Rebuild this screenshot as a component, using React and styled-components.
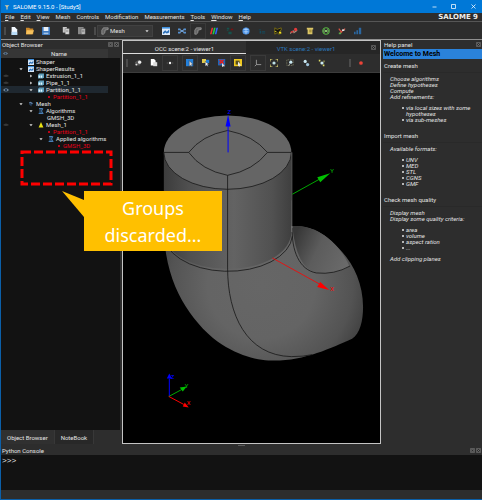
import React from 'react';
import styled, { createGlobalStyle } from 'styled-components';

const GlobalStyle = createGlobalStyle`
    * { box-sizing: border-box; }
    body {
        margin: 0;
        background: #2d2d2d;
        color: #e4e4e4;
        font: 6px/7px Roboto, "Liberation Sans", sans-serif;
    }
    button, select, textarea {
        font: inherit;
        color: inherit;
        margin: 0;
        padding: 0;
        border: 0;
        background: none;
    }
    ul { margin: 0; padding: 0; list-style: none; }
    h2, h3, p { margin: 0; font: inherit; }
    svg { display: block; }
`;

const Window = styled.div`
    position: relative;
    height: 100vh;
    display: flex;
    flex-direction: column;
    border: 1px solid #0b5fa8;
    border-top: 0;
    border-right: 0;
`;

// Title bar
const TitleBar = styled.header`
    height: 13px;
    flex: none;
    display: flex;
    align-items: center;
    padding-left: 3px;
    gap: 3px;
    background: #0078d7;
    color: #fff;
`;

const Title = styled.span`
    flex: 1;
`;

const WindowButton = styled.button`
    width: ${(props) => props.$width || 16}px;
    height: 13px;
    display: grid;
    place-items: center;
`;

// Menu
const MenuBar = styled.nav`
    height: 9px;
    flex: none;
    display: flex;
    align-items: center;
    gap: 6px;
    padding-left: 4px;
    overflow: hidden;
    border-bottom: 1px solid #565656;
`;

const MenuItem = styled.button`
    line-height: 8px;
    white-space: nowrap;
    &::first-letter {
        text-decoration: ${(props) => (props.$key ? 'underline' : 'none')};
    }
`;

const Brand = styled.span`
    margin-left: auto;
    padding: 0 4px;
    color: #eee;
    font: bold 7px/8px "DejaVu Sans", sans-serif;
    white-space: nowrap;
`;

// Toolbars
const Toolbar = styled.div`
    height: ${(props) => props.$height}px;
    flex: none;
    display: flex;
    align-items: center;
    padding-left: 3px;
    background: #2d2d2d;
    border-bottom: 1px solid ${(props) => props.$line};
`;

const Handle = styled.span`
    width: 2px;
    height: 8px;
    flex: none;
    margin-left: ${(props) => props.$before || 0}px;
    margin-right: ${(props) => props.$after || 0}px;
    background: #4b4b4b;
`;

const Spacer = styled.span`
    width: 4px;
    flex: none;
`;

const ToolButton = styled.button`
    width: 16px;
    height: 16px;
    flex: none;
    display: grid;
    place-items: center;
    border: 1px solid ${(props) => (props.$framed ? '#3a3a3a' : 'transparent')};
`;

const Combo = styled.label`
    width: 56px;
    height: 12px;
    flex: none;
    display: flex;
    align-items: center;
    gap: 1px;
    padding: 0 3px;
    margin-right: 5px;
    background: #383838;
    border: 1px solid #414141;
`;

const ComboSelect = styled.select`
    flex: 1;
    appearance: none;
    line-height: 8px;
    outline: 0;
`;

// Docks
const Main = styled.main`
    flex: 1;
    min-height: 0;
    display: grid;
    grid-template-columns: 119px minmax(0, 1fr) 99px;
    column-gap: 2px;
`;

const Dock = styled.section`
    display: flex;
    flex-direction: column;
    min-width: 0;
    min-height: 0;
`;

const DockHeader = styled.h2`
    height: 9px;
    flex: none;
    display: flex;
    align-items: center;
    justify-content: space-between;
    padding: 0 1px;
    line-height: 8px;
`;

const DockControls = styled.span`
    display: flex;
    gap: 1px;
`;

const TreeHeader = styled.div`
    height: 9px;
    flex: none;
    display: grid;
    grid-template-columns: 9px 1fr;
    align-items: center;
    justify-items: center;
    margin-right: 12px;
    background: #363636;
`;

const Tree = styled.ul`
    flex: 1;
    background: #121212;
`;

const TreeRow = styled.li`
    height: 7px;
    display: flex;
    align-items: center;
    margin-right: 12px;
    white-space: nowrap;
    color: ${(props) => (props.$alert ? '#e60019' : '#e4e4e4')};
    background: ${(props) => (props.$selected ? '#1f2830' : 'none')};
`;

const Cell = styled.span`
    width: ${(props) => props.$width}px;
    height: 7px;
    flex: none;
    display: grid;
    place-items: center;
`;

const DockTabs = styled.div`
    height: 15px;
    flex: none;
    display: flex;
`;

const DockTab = styled.button`
    padding: 0 6px;
    height: 14px;
    background: ${(props) => (props.$active ? '#303030' : '#282828')};
    border-right: 1px solid #383838;
`;

// Viewer
const Viewer = styled.section`
    display: flex;
    flex-direction: column;
    min-width: 0;
    min-height: 0;
    margin-bottom: 1px;
    border: 1px solid #c4c4c4;
    background: #000;
`;

const ViewTabs = styled.div`
    height: 13px;
    flex: none;
    display: grid;
    grid-template-columns: 123px 1fr 14px;
    background: #262626;
`;

const ViewTab = styled.button`
    padding-top: 3px;
    color: ${(props) => (props.$active ? '#e4e4e4' : '#2b78bd')};
    background: ${(props) => (props.$active ? '#303030' : 'none')};
    border-bottom: 1px solid ${(props) => (props.$active ? '#ddd' : '#262626')};
`;

const CloseTab = styled.button`
    display: grid;
    place-items: center;
`;

const Scene = styled.svg`
    flex: 1;
    min-height: 0;
    width: 100%;
    font: 6px Roboto, sans-serif;
`;

// Help
const Banner = styled.p`
    height: 10px;
    flex: none;
    padding-left: 1px;
    color: #000;
    background: #2a82da;
    font-size: 7px;
    font-weight: bold;
    line-height: 10px;
`;

const HelpTitle = styled.h3`
    padding-left: 1px;
    height: 14px;
    line-height: 13px;
    border-bottom: 1px solid #292929;
`;

const HelpBody = styled.div`
    padding: 3px 2px 1px 7px;
    font-style: italic;
    line-height: 6px;
    p { margin-bottom: 5px; }
    ul { padding-left: 16px; margin-bottom: 5px; }
    li { position: relative; }
    li::before {
        content: "";
        position: absolute;
        left: -4px;
        top: 2px;
        width: 2px;
        height: 2px;
        border-radius: 1px;
        background: #e4e4e4;
    }
`;

// Console
const Splitter = styled.div`
    width: 7px;
    height: 1px;
    flex: none;
    align-self: center;
    background: #5c5c5c;
`;

const Console = styled.textarea`
    display: block;
    height: 35px;
    flex: none;
    padding: 2px 1px;
    resize: none;
    outline: 0;
    background: #121212;
    font: 8px/8px "Liberation Mono", monospace;
`;

const StatusBar = styled.footer`
    height: 9px;
    flex: none;
`;

// Annotations over the window
const Highlight = styled.svg`
    position: absolute;
    left: 19px;
    top: 150px;
`;

const Callout = styled.p`
    position: absolute;
    left: 83px;
    top: 191px;
    width: 138px;
    padding: 4px 0 2px;
    text-align: center;
    color: #fff;
    background: #ffc000;
    font: 18px/27px "Noto Sans", "Open Sans", sans-serif;
`;

const CalloutTail = styled.svg`
    position: absolute;
    right: 100%;
    top: 0;
`;

const glyphs = {
    app: <path d="M1 2h8L6 5v4H4V5z" fill="#d9c9a0" />,
    file: <><path d="M2 0h4l3 3v7H2z" fill="#f4f9ff" /><path d="M2 6h7v4H2z" fill="#b9dcf7" /></>,
    folder: <><path d="M0 1h4l1 1h4v7H0z" fill="#c9872a" /><path d="M1 4h9L8 9H0z" fill="#f6c15c" /></>,
    save: <><path d="M0 0h10v10H0z" fill="#3d78bd" /><path d="M2 0h6v5H2z" fill="#e9eff7" /><path d="M2 7h6v2H2z" fill="#a5c2e4" /></>,
    copy: <><path d="M1 0h5v7H1z" fill="#c7c7c7" /><path d="M4 2h5v7H4z" fill="#eee" stroke="#555" strokeWidth=".6" /><path d="M5 4h3M5 6h3" stroke="#777" /></>,
    paste: <><path d="M0 0h7v9H0z" fill="#888" /><path d="M4 2h5v7H4z" fill="#ccc" stroke="#444" strokeWidth=".6" /><path d="M5 4h3M5 6h3" stroke="#666" /></>,
    mesh: <path d="M1 9V4l2-3h6v2L5 4v3L3 9z" fill="#666" stroke="#aaa" strokeWidth=".8" />,
    shaper: <><path d="M0 0h10v10H0z" fill="#dceafa" /><path d="M0 0h10v2H0z" fill="#3f8fdc" /><path d="M1 7l3-3 2 2 3-3v4L6 8 4 7 2 9z" fill="#2b6fb8" /></>,
    nodes: <><path d="M2 3l6 4M2 7l6-4" stroke="#9cc6f2" strokeWidth="1.2" /><path d="M0 2h3v2H0zM7 2h3v2H7zM0 6h3v2H0zM7 6h3v2H7zM4 4h2v2H4z" fill="#5590d0" /></>,
    rgb: <><path d="M0 9 2 1h2L2 9z" fill="#e33" /><path d="M3 9 5 1h2L5 9z" fill="#2c4" /><path d="M6 9 8 1h2L8 9z" fill="#36f" /></>,
    dark: <><path d="M1 1h3v2H1zM3 6h4v3H3zM1 4h2v1H1z" fill="#14524c" /><path d="M6 2h3v2H6z" fill="#711" /></>,
    globe: <><circle cx="5" cy="5" r="4.500" fill="#4a90e2" /><path d="M2 3h6M2 6h6M5 1v8" stroke="#b5d8ff" /></>,
    teal: <path d="M1 3h3v1H1zM2 5h2v3H2zM5 5h4v1H5zM5 7h4v1H5z" fill="#16485a" />,
    gear: <><path d="M1 1l3 2 5-2v3L7 5l2 3-3 1-2-2-3 2z" fill="#111" stroke="#8c7c12" /><path d="M1 5h2v1H1zM6 6h3v2H6z" fill="#f1df24" /></>,
    redMesh: <><path d="M0 8l4-3 1 2 4-3" stroke="#b08a7a" fill="none" strokeWidth="1.5" /><circle cx="7" cy="3" r="2" fill="#e43b3b" /><path d="M1 5h3v2H1z" fill="#c33" /></>,
    scroll: <><path d="M1 1h8v2H8v6H2V3H1z" fill="#dcc667" /><path d="M4 4h3M4 6h3" stroke="#806919" /></>,
    green: <><circle cx="5" cy="5" r="4" fill="none" stroke="#57b443" strokeWidth="1.3" /><path d="M3 3l4 4M7 3L3 7M1 5h8" stroke="#8fd874" /></>,
    mixed: <><path d="M1 2l3 4 5-4M2 8l3-2" stroke="#d54" fill="none" strokeWidth="1.5" /><path d="M1 7h3v2H1z" fill="#55aa46" /><path d="M5 3h3v2H5z" fill="#ddd" /></>,
    bars: <path d="M0 6h2v3H0zM3 4h2v5H3zM6 1h3v8H6z" fill="#2a669f" />,
    camera: <><path d="M1 4l5-3 4 2-3 5H2z" fill="#555" /><circle cx="7" cy="4" r="2" fill="#eee" /><circle cx="3" cy="7" r="1.200" fill="#ddd" /></>,
    pages: <><path d="M1 0h4l2 2v6H1z" fill="#fff" /><path d="M4 4h5v5H4z" fill="#ddd" /></>,
    dot: <><circle cx="5" cy="5" r="1.500" fill="#f2f2f2" /><path d="M1 5h1M8 5h1" stroke="#888" /></>,
    cursorBlue: <><path d="M0 0h9v9H0z" fill="#2380dc" /><path d="M4 2l5 5H7l1 3-2-2-2 1z" fill="#ddd" stroke="#123" strokeWidth=".5" /></>,
    cursorYellow: <><path d="M0 0h5v5H0z" fill="#e2cb4e" /><path d="M5 1h4v4H5z" fill="#2380dc" /><path d="M4 3l5 4H7l1 3-2-2-2 1z" fill="#eee" stroke="#123" strokeWidth=".5" /></>,
    cursorRed: <><path d="M0 0h9v8H0z" fill="#2366b6" /><path d="M2 1l5 5M7 1L2 6" stroke="#e02020" strokeWidth="2" /><path d="M5 5l4 4H7l-2 1z" fill="#ddd" /></>,
    cursorGold: <><path d="M0 0h10v9H0z" fill="#efc91f" /><path d="M2 2h5v5H2z" fill="#554e22" /><path d="M5 3l4 5H7v2L5 8z" fill="#eee" /></>,
    axes: <path d="M3 1v6h6M3 7L1 9" stroke="#aaa" fill="none" />,
    fit: <><path d="M0 3V0h3M7 0h3v3M10 7v3H7M3 10H0V7" fill="none" stroke="#e6dc72" strokeWidth="1.400" /><circle cx="5" cy="5" r="2" fill="#bfe3e9" /></>,
    fitBox: <><path d="M1 3V1h8v7H1z" fill="none" stroke="#77785f" strokeDasharray="2 1" /><circle cx="6" cy="4" r="2" fill="#cbeaf3" /><path d="M5 6L3 8" stroke="#ccc" /></>,
    zoom: <><circle cx="4" cy="3" r="2" fill="#cbeaf3" /><circle cx="7" cy="7" r="2" fill="#9fc4da" /></>,
    pan: <><circle cx="5" cy="5" r="2" fill="#cbeaf3" /><path d="M1 1h2v2H1zM7 2h1v2H7zM6 7h2v2H6z" fill="#dada67" /></>,
    record: <circle cx="5" cy="5" r="2.300" fill="#ec4438" />,
    part: <><path d="M0 3l2-2h8v6L8 9H0z" fill="#5f9dbb" /><path d="M1 4h3v4H1zM5 4h2v4H5z" fill="#e1f7ff" /></>,
    root: <><path d="M2 2h5l2 3-3 1v3L2 6z" fill="#26405f" /><path d="M2 3l3-1 2 3" stroke="#96bbe5" fill="none" /></>,
    algo: <path d="M2 1h6L6 5l2 4H2M1 9h8M2 1h5" stroke="#4c83bb" fill="#243f59" strokeWidth="1.500" />,
    warn: <path d="M5 0l4 9H1z" fill="#e6e014" />,
    bullet: <circle cx="5" cy="5" r="1.800" fill="#e60019" />,
    down: <path d="M1 3h8L5 8z" fill="#ddd" />,
    right: <path d="M3 1l5 4-5 4z" fill="#ddd" />,
    eye: <><path d="M0 5q5-6 10 0-5 5-10 0z" fill="#77899b" /><circle cx="5" cy="5" r="2" fill="#233c55" /></>,
    eyeOff: <path d="M0 5q5-5 10 0-5 3-10 0z" fill="#383838" />,
    float: <path d="M1 1h8v8H1zM3 3h4v4H3z" fill="none" stroke="#8b8b8b" />,
    close: <path d="M1 1h8v8H1zM2 2l6 6M8 2L2 8" fill="none" stroke="#8b8b8b" />,
    minimize: <path d="M1 6h8" stroke="#fff" strokeWidth="1.500" />,
    maximize: <path d="M1 1h8v8H1z" stroke="#fff" strokeWidth="1.500" fill="none" />,
    quit: <path d="M1 1l8 8M9 1L1 9" stroke="#fff" strokeWidth="1.500" />,
};

const Glyph = ({ name, size = 8 }) => (
    <svg width={size} height={size} viewBox="0 0 10 10" aria-hidden="true">{glyphs[name]}</svg>
);

const menus = [
    ['File', true], ['Edit', true], ['View', true], ['Mesh'], ['Controls'],
    ['Modification'], ['Measurements'], ['Tools', true], ['Window', true], ['Help', true],
];

const meshTools = [
    'shaper', 'nodes', 'mesh', 'rgb', 'dark', 'globe', 'teal',
    'gear', 'redMesh', 'scroll', 'green', 'mixed', 'bars',
];

const tree = [
    { label: 'Shaper', depth: 0, icon: 'shaper' },
    { label: 'ShaperResults', depth: 0, icon: 'shaper', arrow: 'down' },
    { label: 'Extrusion_1_1', depth: 1, icon: 'part', arrow: 'right', eye: 'eyeOff' },
    { label: 'Pipe_1_1', depth: 1, icon: 'part', arrow: 'right', eye: 'eyeOff' },
    { label: 'Partition_1_1', depth: 1, icon: 'part', arrow: 'down', eye: 'eye', selected: true },
    { label: 'Partition_1_1', depth: 2, icon: 'bullet', alert: true },
    { label: 'Mesh', depth: 0, icon: 'root', arrow: 'down' },
    { label: 'Algorithms', depth: 1, icon: 'algo', arrow: 'down' },
    { label: 'GMSH_3D', depth: 2 },
    { label: 'Mesh_1', depth: 1, icon: 'warn', arrow: 'down', eye: 'eyeOff' },
    { label: 'Partition_1_1', depth: 2, icon: 'bullet', alert: true },
    { label: 'Applied algorithms', depth: 2, icon: 'algo', arrow: 'down' },
    { label: 'GMSH_3D', depth: 3, icon: 'bullet', alert: true },
];

const iconWidth = (row) => {
    if (!row.icon) return 2;
    return row.alert ? 8 : 11;
};

const Tools = ({ names, framed = [] }) => names.map((name) => (
    <ToolButton key={name} $framed={framed.includes(name)} aria-label={name}>
        <Glyph name={name} />
    </ToolButton>
));

const DockTitle = ({ children, single }) => (
    <DockHeader>
        {children}
        <DockControls>
            {!single && <Glyph name="float" size={5} />}
            <Glyph name="close" size={5} />
        </DockControls>
    </DockHeader>
);

const PipeScene = () => (
    <Scene viewBox="123 73 258 370" role="img" aria-label="Pipe elbow">
        <defs>
            <linearGradient id="side" x1="0" x2="1">
                <stop offset="0" stopColor="#3c3c3c" />
                <stop offset=".2" stopColor="#505050" />
                <stop offset=".55" stopColor="#636363" />
                <stop offset=".85" stopColor="#515151" />
                <stop offset="1" stopColor="#3f3f3f" />
            </linearGradient>
            <radialGradient id="elbow" gradientUnits="userSpaceOnUse" cx="262" cy="285" r="108">
                <stop offset="0" stopColor="#666" />
                <stop offset=".5" stopColor="#646464" />
                <stop offset=".85" stopColor="#535353" />
                <stop offset="1" stopColor="#434343" />
            </radialGradient>
            <linearGradient id="bend" x1="0" y1=".3" x2="1" y2=".7">
                <stop offset="0" stopColor="#373737" />
                <stop offset=".45" stopColor="#5c5c5c" />
                <stop offset="1" stopColor="#6a6a6a" />
            </linearGradient>
        </defs>
        <path d="M164 225C164 280 187 315 213 338C237 357 260 361 275 361C305 361 333 348 353 339C361 334 364 321 364 307C364 285 355 265 343 252C330 238 318 226 294 226L292 226V200H164Z" fill="url(#elbow)" />
        <path d="M293 226C318 224 341 244 350 266C346 270 334 274 317 273Q297 268 293 226Z" fill="url(#bend)" />
        <path d="M164 152V232A64 37 0 0 0 292 232V152Z" fill="url(#side)" />
        <ellipse cx="228" cy="152" rx="64" ry="37" fill="#656565" />
        <g fill="none" stroke="#171717" strokeWidth=".8">
            <path d="M164 152A64 37 0 0 0 292 152M164 232A64 37 0 0 0 293 236" />
            <path d="M189 152Q202 135 228 130Q254 135 268 152Q254 170 228 175Q202 170 189 152ZM164 152H189M268 152H292" />
            <path d="M228 175V268C228 315 247 356 292 357Q305 357 313 355" />
            <path d="M293 228C292 250 300 270 317 273Q335 275 351 266" />
        </g>
        <path d="M292.500 152V232" stroke="#8b8b8b" strokeWidth=".7" />
        <g stroke="#00f" fill="#00f">
            <path d="M228.500 152V123" />
            <path d="M226 126h5l-2.500-12z" stroke="none" />
            <text x="228" y="113" stroke="none">Z</text>
            <path d="M169.500 397V379" />
            <path d="M167 379h5l-2.500-5z" stroke="none" />
            <text x="171" y="379" stroke="none">Z</text>
        </g>
        <g stroke="#00a800" fill="#00c000">
            <path d="M293 194L320 179" />
            <path d="M318 177l3 5 10-9z" stroke="none" />
            <text x="331" y="173" stroke="none">Y</text>
            <path d="M169 397L182 390" />
            <path d="M180 388l3 4 4-5z" stroke="none" />
            <text x="185" y="389" stroke="none">Y</text>
        </g>
        <g stroke="#f00" fill="#f00">
            <path d="M273 258L320 284" strokeWidth=".8" />
            <path d="M321 282l-3 5 12 3z" stroke="none" />
            <text x="331" y="291" stroke="none">X</text>
            <path d="M169 397L184 405" />
            <path d="M185 403l-2 4 6 1z" stroke="none" />
            <text x="187" y="406" stroke="none">X</text>
        </g>
    </Scene>
);

const App = () => (
    <>
        <GlobalStyle />
        <Window>
            <TitleBar>
                <Glyph name="app" size={6} />
                <Title>SALOME 9.15.0 - [Study5]</Title>
                <WindowButton aria-label="Minimize"><Glyph name="minimize" size={5} /></WindowButton>
                <WindowButton aria-label="Maximize"><Glyph name="maximize" size={5} /></WindowButton>
                <WindowButton aria-label="Close" $width={18}><Glyph name="quit" size={5} /></WindowButton>
            </TitleBar>

            <MenuBar>
                {menus.map(([label, key]) => <MenuItem key={label} $key={key}>{label}</MenuItem>)}
                <Brand>SALOME 9</Brand>
            </MenuBar>

            <Toolbar $height={18} $line="#909090">
                <Handle />
                <Tools names={['file', 'folder', 'save']} />
                <Spacer />
                <Tools names={['copy', 'paste']} />
                <Handle $before={4} $after={1} />
                <Combo>
                    <Glyph name="mesh" />
                    <ComboSelect aria-label="Module" defaultValue="Mesh">
                        <option>Mesh</option>
                    </ComboSelect>
                    <Glyph name="down" size={4} />
                </Combo>
                <Tools names={meshTools} framed={['mesh']} />
            </Toolbar>

            <Main>
                <Dock>
                    <DockTitle>Object Browser</DockTitle>
                    <TreeHeader>
                        <Glyph name="eye" size={5} />
                        <span>Name</span>
                    </TreeHeader>
                    <Tree>
                        {tree.map((row, i) => (
                            <TreeRow key={i} $alert={row.alert} $selected={row.selected}>
                                <Cell $width={9}>{row.eye && <Glyph name={row.eye} size={6} />}</Cell>
                                <Cell $width={7 + row.depth * 10} />
                                <Cell $width={8}>{row.arrow && <Glyph name={row.arrow} size={4} />}</Cell>
                                <Cell $width={iconWidth(row)}>{row.icon && <Glyph name={row.icon} size={6} />}</Cell>
                                {row.label}
                            </TreeRow>
                        ))}
                    </Tree>
                    <DockTabs>
                        <DockTab $active>Object Browser</DockTab>
                        <DockTab>NoteBook</DockTab>
                    </DockTabs>
                </Dock>

                <Viewer>
                    <ViewTabs>
                        <ViewTab $active>OCC scene:2 - viewer1</ViewTab>
                        <ViewTab>VTK scene:2 - viewer1</ViewTab>
                        <CloseTab aria-label="Close view"><Glyph name="close" size={5} /></CloseTab>
                    </ViewTabs>
                    <Toolbar $height={19} $line="#3c3c3c">
                        <Handle $after={2} />
                        <Tools names={['camera', 'pages', 'dot']} framed={['dot']} />
                        <Spacer />
                        <Tools
                            names={['cursorBlue', 'cursorYellow', 'cursorRed', 'cursorGold']}
                            framed={['cursorBlue', 'cursorGold']}
                        />
                        <Spacer />
                        <Tools names={['axes', 'fit', 'fitBox', 'zoom', 'pan']} framed={['axes']} />
                        <Handle $before={19} $after={2} />
                        <Tools names={['record']} />
                    </Toolbar>
                    <PipeScene />
                </Viewer>

                <Dock>
                    <DockTitle single>Help panel</DockTitle>
                    <Banner>Welcome to Mesh</Banner>
                    <HelpTitle>Create mesh</HelpTitle>
                    <HelpBody>
                        <p>Choose algorithms<br />Define hypotheses<br />Compute<br />Add refinements:</p>
                        <ul>
                            <li>via local sizes with some hypotheses</li>
                            <li>via sub-meshes</li>
                        </ul>
                    </HelpBody>
                    <HelpTitle>Import mesh</HelpTitle>
                    <HelpBody>
                        <p>Available formats:</p>
                        <ul>
                            <li>UNV</li>
                            <li>MED</li>
                            <li>STL</li>
                            <li>CGNS</li>
                            <li>GMF</li>
                        </ul>
                    </HelpBody>
                    <HelpTitle>Check mesh quality</HelpTitle>
                    <HelpBody>
                        <p>Display mesh<br />Display some quality criteria:</p>
                        <ul>
                            <li>area</li>
                            <li>volume</li>
                            <li>aspect ration</li>
                            <li>...</li>
                        </ul>
                        <p>Add clipping planes</p>
                    </HelpBody>
                </Dock>
            </Main>

            <Splitter />
            <DockTitle>Python Console</DockTitle>
            <Console aria-label="Python Console" defaultValue=">>>" spellCheck={false} />
            <StatusBar />

            <Highlight width="94" height="37" viewBox="0 0 94 37" aria-hidden="true">
                <path d="M2 2H91V34H2Z" fill="none" stroke="#f00" strokeWidth="3" strokeDasharray="9 3" />
            </Highlight>
            <Callout>
                <CalloutTail width="22" height="28" viewBox="0 0 22 28" aria-hidden="true">
                    <path d="M0 0L22 9V26Z" fill="#ffc000" />
                </CalloutTail>
                Groups<br />discarded...
            </Callout>
        </Window>
    </>
);

export default App;
